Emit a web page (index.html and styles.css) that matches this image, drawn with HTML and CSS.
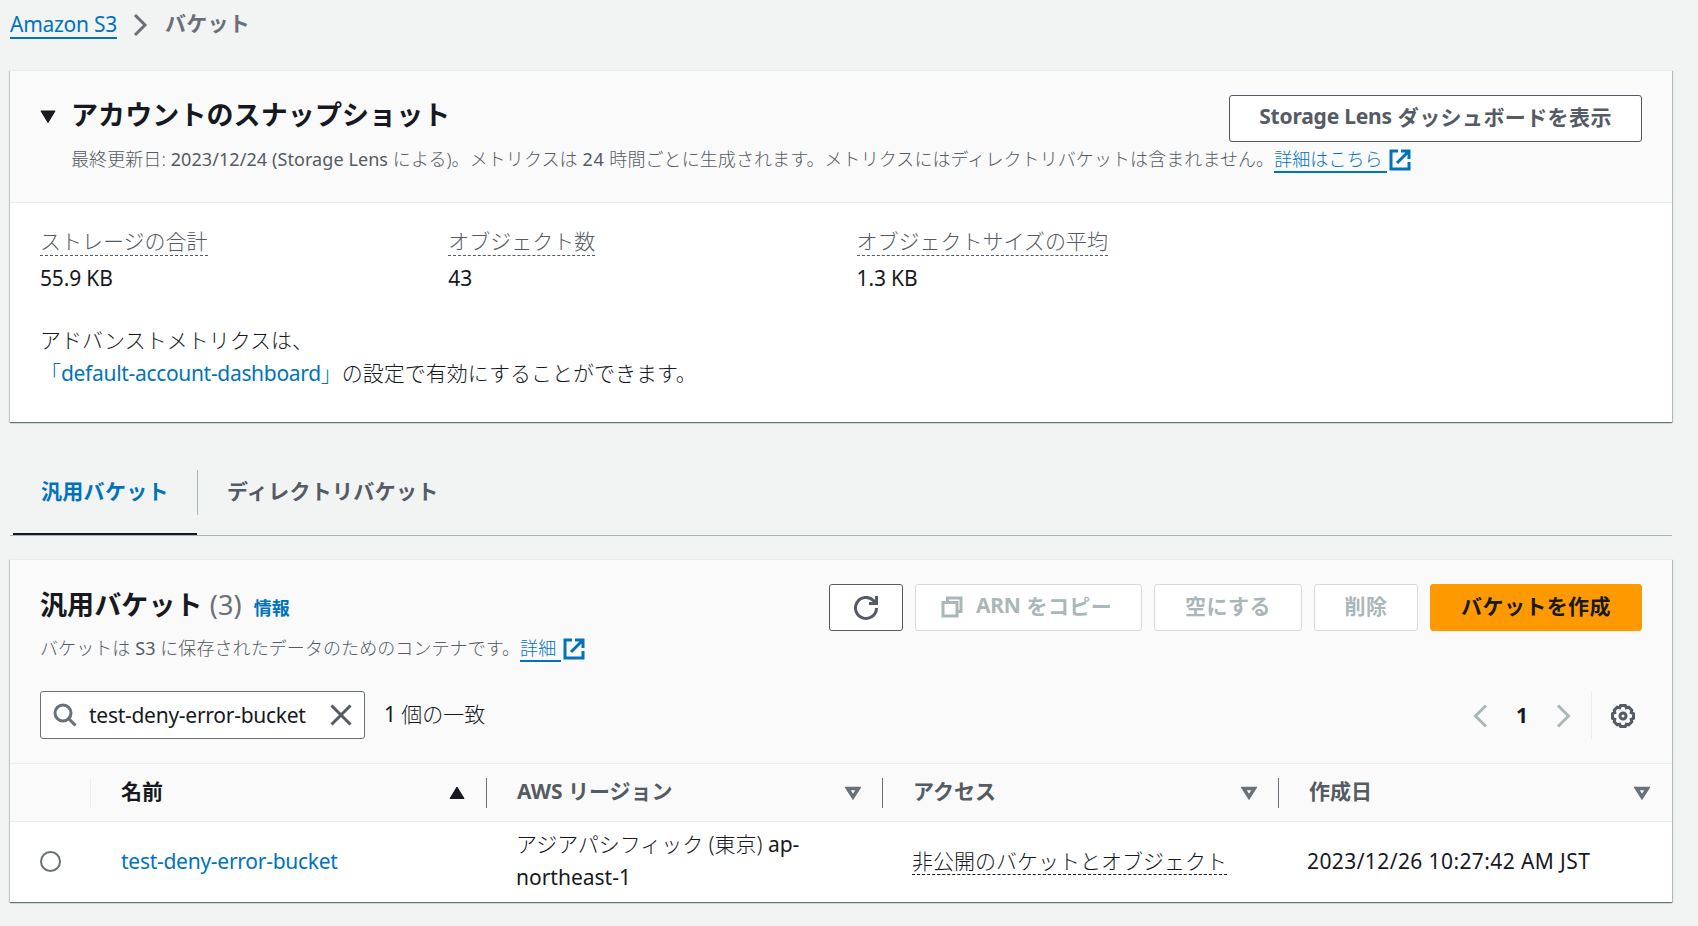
FILE: index.html
```html
<!DOCTYPE html>
<html lang="ja">
<head>
  <title>S3 バケット</title>
  <meta charset="utf-8">
  <link rel="stylesheet" href="styles.css">
</head>
<body>

  <nav class="breadcrumb">
    <a class="underlined en" href="#">Amazon S3</a>
    <svg class="chevron" width="15" height="24" viewBox="0 0 15 24"><path d="M2 2l10 10L2 22"/></svg>
    <span class="current">バケット</span>
  </nav>

  <!-- Account snapshot -->
  <section class="container snapshot">
    <div class="container-header">
      <svg class="caret" width="16" height="14" viewBox="0 0 16 14"><path d="M1 1h14L8 12.500z"/></svg>
      <div class="heading">
        <h2>アカウントのスナップショット</h2>
        <p class="description">最終更新日: <span class="en">2023/12/24 (Storage Lens</span> による)。メトリクスは <span class="en num">24</span> 時間ごとに生成されます。メトリクスにはディレクトリバケットは含まれません。<a class="underlined" href="#">詳細はこちら&nbsp;</a><svg class="external" width="22" height="22" viewBox="0 0 22 22"><path d="M9 2H2v18h18v-7M12 2h8v8M20 2L8 14"/></svg></p>
      </div>
      <button class="button"><span class="en">Storage Lens</span> ダッシュボードを表示</button>
    </div>
    <div class="container-body">
      <dl class="stats">
        <div>
          <dt><span class="dashed">ストレージの合計</span></dt>
          <dd class="en">55.9 KB</dd>
        </div>
        <div>
          <dt><span class="dashed">オブジェクト数</span></dt>
          <dd class="en">43</dd>
        </div>
        <div>
          <dt><span class="dashed">オブジェクトサイズの平均</span></dt>
          <dd class="en">1.3 KB</dd>
        </div>
      </dl>
      <p class="advanced">アドバンストメトリクスは、<br><a href="#">「<span class="en">default-account-dashboard</span>」</a>の設定で有効にすることができます。</p>
    </div>
  </section>

  <!-- Tabs -->
  <div class="tabs">
    <a class="tab active" href="#">汎用バケット</a>
    <a class="tab" href="#">ディレクトリバケット</a>
  </div>

  <!-- Bucket list -->
  <section class="container buckets">
    <div class="list-header">
      <div class="heading">
        <h2>汎用バケット <span class="counter">(3)</span><a class="info" href="#">情報</a></h2>
        <p class="description">バケットは <span class="en">S3</span> に保存されたデータのためのコンテナです。<a class="underlined" href="#">詳細&nbsp;</a><svg class="external" width="22" height="22" viewBox="0 0 22 22"><path d="M9 2H2v18h18v-7M12 2h8v8M20 2L8 14"/></svg></p>
      </div>
      <div class="actions">
        <button class="button refresh"><svg width="24" height="24" viewBox="0 0 24 24"><path d="M22.500 12a10.500 10.500 0 1 1-3-7.400l2.500 2.900M22.500 0v7.500H15"/></svg></button>
        <button class="button copy" disabled><svg width="22" height="22" viewBox="0 0 22 22"><path d="M2 6.500h14V20H2zM6.500 6V2H20v13.500h-4"/></svg><span class="en">ARN</span> をコピー</button>
        <button class="button empty" disabled>空にする</button>
        <button class="button delete" disabled>削除</button>
        <button class="button primary">バケットを作成</button>
      </div>
    </div>

    <div class="toolbar">
      <div class="search">
        <svg width="24" height="24" viewBox="0 0 24 24"><circle cx="10" cy="10" r="8"/><path d="M15.500 15.500l7 7"/></svg>
        <span class="query en">test-deny-error-bucket</span>
        <svg class="clear" width="22" height="22" viewBox="0 0 22 22"><path d="M1.500 1.500l19 19M20.500 1.500l-19 19"/></svg>
      </div>
      <span class="matches"><span class="en">1</span> 個の一致</span>
      <div class="pagination">
        <svg class="arrow" width="15" height="24" viewBox="0 0 15 24"><path d="M13 1.500L2.500 12 13 22.500"/></svg>
        <span class="page">1</span>
        <svg class="arrow" width="15" height="24" viewBox="0 0 15 24"><path d="M2 1.500L12.500 12 2 22.500"/></svg>
      </div>
      <div class="settings">
        <svg width="26" height="26" viewBox="0 0 26 26"><path d="M10.700 2.500h4.600l1 2.300 2.400-.6 3.100 3.100-.6 2.400 2.300 1v4.600l-2.300 1 .6 2.400-3.100 3.100-2.400-.6-1 2.300h-4.600l-1-2.300-2.400.6-3.100-3.100.6-2.400-2.300-1v-4.600l2.300-1-.6-2.400 3.100-3.100 2.400.6z"/><circle cx="13" cy="13" r="3"/></svg>
      </div>
    </div>

    <table>
      <thead>
        <tr>
          <th class="select"></th>
          <th class="sorted"><div class="cell"><span>名前</span><svg width="16" height="14" viewBox="0 0 16 14"><path d="M8 1L15 12.500H1z"/></svg></div></th>
          <th><div class="cell"><span>AWS リージョン</span><svg width="16" height="14" viewBox="0 0 16 14"><path d="M2.500 2.500h11L8 11z"/></svg></div></th>
          <th><div class="cell"><span>アクセス</span><svg width="16" height="14" viewBox="0 0 16 14"><path d="M2.500 2.500h11L8 11z"/></svg></div></th>
          <th class="last"><div class="cell"><span>作成日</span><svg width="16" height="14" viewBox="0 0 16 14"><path d="M2.500 2.500h11L8 11z"/></svg></div></th>
        </tr>
      </thead>
      <tbody>
        <tr>
          <td class="select"><span class="radio"></span></td>
          <td class="name"><a class="en" href="#">test-deny-error-bucket</a></td>
          <td>アジアパシフィック (東京) <span class="region">ap-<br>northeast-1</span></td>
          <td><span class="dashed">非公開のバケットとオブジェクト</span></td>
          <td class="date">2023/12/26 10:27:42 AM JST</td>
        </tr>
      </tbody>
    </table>
  </section>

</body>
</html>
```
FILE: styles.css
```css
/* General Page Styling */
* {
  box-sizing: border-box;
}

body {
  font-family: "Noto Sans", "Noto Sans CJK JP", sans-serif;
  font-size: 21px;
  font-weight: 300;
  line-height: 33px;
  color: #16191f;
  background-color: #f2f3f3;
  margin: 0;
  padding: 0 26px 0 10px;
  height: 926px;
  overflow: hidden;
}

h2, p, dl, dd {
  margin: 0;
}

a {
  color: #0073bb;
  text-decoration: none;
}

svg {
  flex: none;
  fill: none;
  stroke: currentColor;
  stroke-width: 3;
}

/* Latin text is a step heavier than the Japanese around it */
.en {
  font-weight: 400;
  letter-spacing: -0.27px;
}

.underlined {
  display: inline-block;
  line-height: 26px;
  border-bottom: 2px solid #0073bb;
}

.dashed {
  display: inline-block;
  line-height: 28px;
  border-bottom: 1px dashed currentColor;
}

/* Breadcrumb */
.breadcrumb {
  display: flex;
  align-items: center;
  height: 50px;
  margin-bottom: 20px;
  color: #687078;
}

.breadcrumb .chevron {
  margin: 0 17px 0 16px;
}

.breadcrumb .current {
  font-weight: bold;
  letter-spacing: 0.3px;
  padding-bottom: 3px;
}

/* Container */
.container {
  background-color: #fff;
  border-top: 1px solid #eaeded;
  box-shadow: 0 1px 1px 0 rgba(0, 28, 36, 0.4), 1px 1px 1px 0 rgba(0, 28, 36, 0.2), -1px 1px 1px 0 rgba(0, 28, 36, 0.15);
}

h2 {
  font-size: 27px;
  line-height: 36px;
  letter-spacing: 0.1px;
  padding-top: 2px;
}

.description {
  font-size: 18px;
  letter-spacing: 0.08px;
  margin-top: 6px;
  color: #545b64;
  white-space: nowrap;
}

.description .en {
  letter-spacing: 0.08px;
}

.description .num {
  letter-spacing: 0.8px;
}

.description .underlined {
  line-height: 24px;
}

.external {
  color: #0073bb;
  margin-left: 2px;
  vertical-align: -5px;
}

/* Snapshot */
.snapshot {
  height: 352px;
}

.container-header {
  display: flex;
  align-items: flex-start;
  height: 132px;
  padding: 24px 30px 0;
  background-color: #fafafa;
  border-bottom: 1px solid #eaeded;
}

.container-header .caret {
  margin: 15px 15px 0 0;
  fill: currentColor;
  stroke-width: 1;
}

.container-header .heading {
  width: 0;
  flex: 1;
}

.container-header .description {
  margin-top: 10px;
}

.container-body {
  padding: 22px 30px;
}

.stats {
  display: grid;
  grid-template-columns: repeat(4, 408.300px);
}

.stats dt {
  color: #545b64;
  height: 37px;
}

.stats dd {
  letter-spacing: -0.15px;
}

.advanced {
  margin-top: 29px;
}

.advanced .en {
  letter-spacing: -0.32px;
}

/* Buttons */
.button {
  display: flex;
  flex: none;
  align-items: center;
  justify-content: center;
  height: 47px;
  padding: 0 0 6px;
  font-family: inherit;
  font-size: 21px;
  font-weight: bold;
  letter-spacing: 0.4px;
  color: #545b64;
  background-color: #fff;
  border: 1px solid #545b64;
  border-radius: 3px;
  white-space: pre;
}

.button .en {
  font-weight: bold;
  letter-spacing: -0.2px;
}

.container-header .button {
  width: 413px;
}

.button:disabled {
  color: #aab7b8;
  border-color: #d5dbdb;
}

.button.primary {
  width: 212px;
  color: #16191f;
  background-color: #ff9900;
  border-color: #ff9900;
}

.button.refresh {
  width: 74px;
  padding: 0;
}

.button.copy {
  width: 227px;
  padding-right: 4px;
}

.copy svg {
  margin: 5px 13px 0 0;
}

.empty {
  width: 148px;
}

.delete {
  width: 104px;
}

/* Tabs */
.tabs {
  display: flex;
  margin-top: 48px;
  padding-left: 3px;
  height: 66px;
  border-bottom: 1px solid #aab7b8;
}

.tab {
  font-weight: bold;
  letter-spacing: 0.3px;
  color: #545b64;
  padding: 5px 30px 0;
  white-space: nowrap;
}

.tab.active {
  position: relative;
  width: 184px;
  padding-left: 28px;
  color: #0073bb;
  border-bottom: 2px solid #16191f;
}

/* Divider after the active tab */
.tab.active::after {
  content: "";
  position: absolute;
  right: -1px;
  top: 0;
  height: 45px;
  border-right: 1px solid #aab7b8;
}

/* Bucket list */
.buckets {
  margin-top: 23px;
  background-color: #fafafa;
}

.list-header {
  display: flex;
  justify-content: space-between;
  height: 131px;
  padding: 24px 30px 0;
}

.list-header h2 {
  padding-top: 3px;
}

.counter {
  font-weight: normal;
  color: #687078;
}

.info {
  font-size: 18px;
  margin-left: 12px;
}

.actions {
  display: flex;
  gap: 12px;
}

.toolbar {
  display: flex;
  align-items: center;
  height: 72px;
  padding: 0 30px 24px;
}

.search {
  display: flex;
  align-items: center;
  width: 325px;
  height: 48px;
  padding: 0 12px;
  color: #687078;
  background-color: #fff;
  border: 1px solid #687078;
  border-radius: 3px;
}

.search .query {
  flex: 1;
  margin-left: 12px;
  color: #16191f;
}

.search .clear {
  color: #545b64;
}

.matches {
  margin-left: 19px;
  padding-bottom: 2px;
}

.pagination {
  display: flex;
  align-items: center;
  margin-left: auto;
  margin-right: 20px;
  padding-top: 2px;
}

.pagination .arrow {
  color: #aab7b8;
}

.page {
  width: 68px;
  padding-bottom: 2px;
  text-align: center;
  font-weight: bold;
}

.settings {
  display: flex;
  align-items: center;
  height: 48px;
  padding: 2px 6px 0 18px;
  color: #545b64;
  border-left: 1px solid #eaeded;
}

/* Table */
table {
  width: 100%;
  table-layout: fixed;
  border-collapse: collapse;
}

th {
  width: 396px;
  height: 58px;
  padding: 0;
  text-align: left;
  color: #545b64;
  border-top: 1px solid #eaeded;
  border-bottom: 1px solid #eaeded;
}

th.select {
  width: 80px;
}

th.sorted {
  width: 397px;
  color: #16191f;
}

th.last {
  width: auto;
}

.cell {
  display: flex;
  align-items: center;
  justify-content: space-between;
  height: 30px;
  padding: 0 21px 0 30px;
  border-right: 1px solid #687078;
}

.cell span {
  padding-bottom: 3px;
}

.cell svg {
  color: #687078;
  stroke-width: 3.5;
}

.sorted .cell {
  border-left: 1px solid #eaeded;
}

.sorted .cell svg {
  color: #16191f;
  fill: currentColor;
  stroke-width: 1;
}

.last .cell {
  padding-right: 22px;
  border-right: none;
}

td {
  height: 80px;
  padding: 0 0 1px 29px;
  background-color: #fff;
}

td.select {
  padding-left: 30px;
}

td.name {
  padding-left: 31px;
}

td .dashed {
  line-height: 25px;
}

.region {
  font-weight: 400;
}

td.date {
  padding-left: 28px;
  font-weight: 400;
  letter-spacing: 0.4px;
}

.radio {
  display: block;
  width: 21px;
  height: 21px;
  border: 2px solid #687078;
  border-radius: 50%;
}
```
